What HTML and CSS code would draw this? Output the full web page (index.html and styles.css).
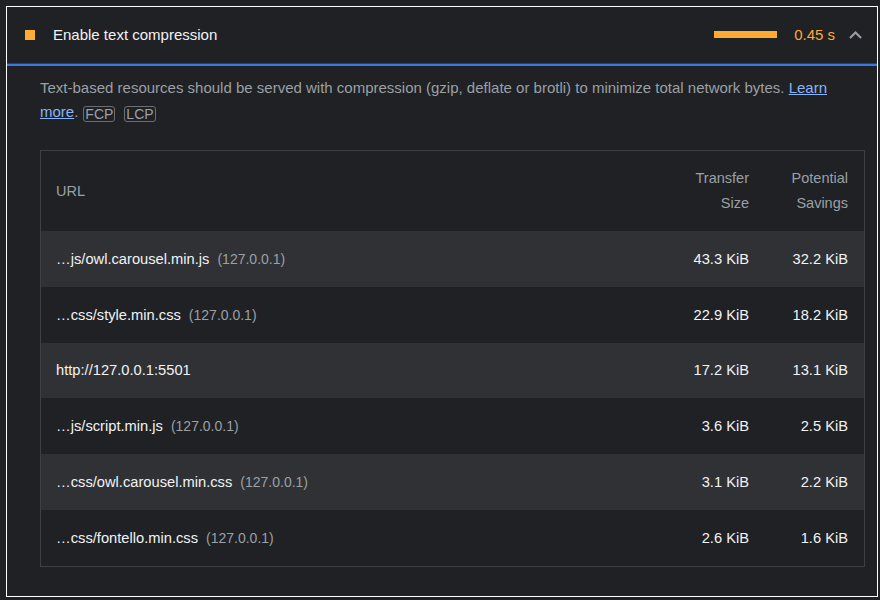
FILE: index.html
```html
<!DOCTYPE html>
<html lang="en">
<head>
<meta charset="utf-8">
<title>Enable text compression</title>
<link rel="stylesheet" href="styles.css">
</head>
<body>
<div class="audit">
  <div class="summary">
    <span class="icon"></span>
    <span class="title">Enable text compression</span>
    <span class="bar"></span>
    <span class="value">0.45 s</span>
    <svg class="chevron" width="13" height="8" viewBox="0 0 13 8"><path d="M1 7 L6.5 1.5 L12 7" fill="none" stroke="#9aa0a6" stroke-width="2"/></svg>
  </div>
  <div class="details">
    <p class="desc">Text-based resources should be served with compression (gzip, deflate or brotli) to minimize total network bytes. <a href="#">Learn more</a>.<span class="badges"><span class="badge">FCP</span><span class="badge">LCP</span></span></p>
    <table class="tbl">
      <thead>
        <tr><th class="url">URL</th><th class="num c2">Transfer<br>Size</th><th class="num c3">Potential<br>Savings</th></tr>
      </thead>
      <tbody>
        <tr><td class="url">…js/owl.carousel.min.js<span class="host">(127.0.0.1)</span></td><td class="num">43.3 KiB</td><td class="num">32.2 KiB</td></tr>
        <tr><td class="url">…css/style.min.css<span class="host">(127.0.0.1)</span></td><td class="num">22.9 KiB</td><td class="num">18.2 KiB</td></tr>
        <tr><td class="url">http://127.0.0.1:5501</td><td class="num">17.2 KiB</td><td class="num">13.1 KiB</td></tr>
        <tr><td class="url">…js/script.min.js<span class="host">(127.0.0.1)</span></td><td class="num">3.6 KiB</td><td class="num">2.5 KiB</td></tr>
        <tr><td class="url">…css/owl.carousel.min.css<span class="host">(127.0.0.1)</span></td><td class="num">3.1 KiB</td><td class="num">2.2 KiB</td></tr>
        <tr><td class="url">…css/fontello.min.css<span class="host">(127.0.0.1)</span></td><td class="num">2.6 KiB</td><td class="num">1.6 KiB</td></tr>
      </tbody>
    </table>
  </div>
</div>
</body>
</html>
```
FILE: styles.css
```css
html, body {
  margin: 0;
  padding: 0;
  background: #202124;
}
body {
  padding: 6px 2px 3px 6px;
  font-family: "Liberation Sans", Arial, sans-serif;
  font-size: 14px;
  color: #e8eaed;
}
.audit {
  border: 1px solid #ffffff;
  box-sizing: border-box;
  height: 591px;
}
.summary {
  display: flex;
  align-items: center;
  height: 55px;
  padding: 0 15px 1px 18px;
  border-bottom: 1px solid #3c4043;
  box-shadow: 0 2px 0 #3b78e7;
  margin-bottom: 2px;
}
.icon {
  width: 10px;
  height: 10px;
  background: #ffaa33;
  flex: none;
}
.title {
  margin-left: 18px;
  font-size: 15px;
  color: #f1f3f4;
  flex: 1;
}
.bar {
  width: 63px;
  height: 7px;
  background: #ffaa33;
}
.value {
  margin-left: 17px;
  color: #ffaa33;
  font-size: 15px;
}
.chevron {
  margin-left: 14px;
  display: block;
}
.details {
  padding: 10px 12px 0 33px;
}
.desc {
  margin: 0;
  line-height: 24px;
  font-size: 15px;
  color: #9aa0a6;
}
.desc a {
  color: #8ab4f8;
  text-decoration: underline;
}
.badges {
  display: inline-flex;
  gap: 9px;
  margin-left: 5px;
  vertical-align: -2px;
}
.badge {
  display: block;
  border: 1px solid #6b6f73;
  border-radius: 3px;
  padding: 0 1px;
  line-height: 14px;
  font-size: 14px;
  color: #9aa0a6;
}
.tbl {
  margin-top: 26px;
  width: 100%;
  border-collapse: collapse;
  border: 1px solid #3f4043;
}
.tbl th {
  height: 78px;
  font-weight: normal;
  color: #9aa0a6;
  line-height: 25px;
  font-size: 14.5px;
}
.tbl td {
  height: 55.8px;
  font-size: 14.7px;
  color: #f1f3f4;
  padding: 0;
}
.tbl tbody tr:nth-child(odd) {
  background: #303134;
}
.url {
  text-align: left;
  padding-left: 15px !important;
}
.num {
  text-align: right;
  padding-right: 16px !important;
  white-space: nowrap;
}
.c2 { width: 80px; }
.c3 { width: 82px; }
.host {
  margin-left: 8px;
  color: #9aa0a6;
  font-size: 14px;
}
```
